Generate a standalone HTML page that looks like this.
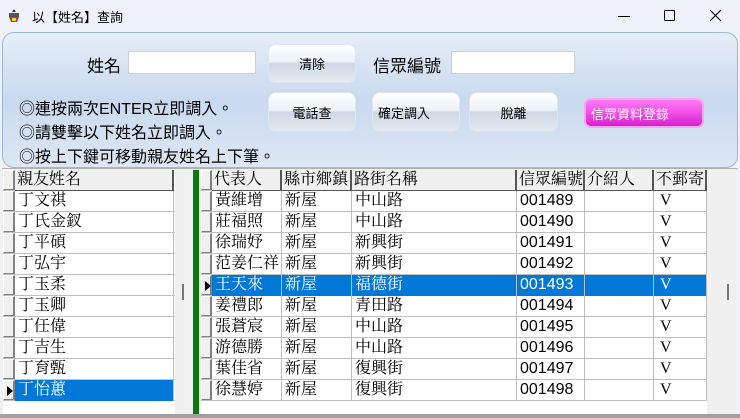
<!DOCTYPE html>
<html><head><meta charset="utf-8"><style>
*{margin:0;padding:0;box-sizing:border-box}
body{width:740px;height:418px;overflow:hidden;background:#eef2f8;font-family:"Liberation Sans","Noto Sans CJK TC",sans-serif;position:relative}
.a{position:absolute}
.panel{left:2px;top:32px;width:736px;height:136px;border:1px solid #9bb8dc;border-radius:12px;background:linear-gradient(#e6eef9 0%,#c9d9ee 50%,#dde7f5 100%)}
.lbl{font-size:17px;color:#000}
.inp{background:#fff;border:1px solid #c8cfd8}
.btn{border:1px solid #dde6f0;border-radius:8px;background:linear-gradient(#ffffff 0%,#eef3fa 45%,#cfd8e3 50%,#e4eaf2 100%);font-size:13px;display:flex;align-items:center;justify-content:center;color:#000}
.tip{font-size:16px;left:19px}
.grid{background:#fff}
.row{position:absolute;height:21px;border-bottom:1px solid #bfbfbf;font-family:"Liberation Serif","Noto Serif CJK TC",serif;font-size:16px;line-height:20px}
.c{position:absolute;top:0;height:21px;border-right:1px solid #bfbfbf;padding-left:3px;white-space:nowrap;overflow:hidden}
.ind{position:absolute;top:0;height:20px;background:#f0f0f0;border-right:2px solid #808080;border-bottom:1px solid #808080;border-top:1px solid #fff;border-left:1px solid #fff}
.hd .c{background:#f0f0f0;border-right:2px solid #555;border-bottom:1px solid #555;padding-left:2px}
.sel{background:#0078d7;color:#fff}
.arrow{position:absolute;left:3px;top:5px;width:0;height:0;border-top:5px solid transparent;border-bottom:5px solid transparent;border-left:6px solid #000}
</style></head><body>
<svg class="a" style="left:7px;top:8px" width="14" height="16" viewBox="0 0 14 16"><path d="M7 1 L9 4 L5 4Z" fill="#333"/><rect x="2" y="5" width="10" height="4" fill="#555"/><path d="M2 9 L12 9 L10 14 L4 14Z" fill="#c0392b"/><rect x="5" y="10" width="4" height="3" fill="#f5d040"/></svg>
<div class="a" style="left:32px;top:7px;font-size:13px">以【姓名】查詢</div>
<div class="a" style="left:618px;top:16px;width:12px;height:1px;background:#000"></div>
<div class="a" style="left:664px;top:10px;width:11px;height:11px;border:1px solid #000;border-radius:1px"></div>
<svg class="a" style="left:709px;top:9px" width="13" height="13"><path d="M1 1L12 12M12 1L1 12" stroke="#000" stroke-width="1.2"/></svg>

<div class="a panel"></div>
<div class="a lbl" style="left:87px;top:52px">姓名</div>
<div class="a inp" style="left:128px;top:51px;width:128px;height:23px"></div>
<div class="a btn" style="left:268px;top:44px;width:88px;height:39px">清除</div>
<div class="a lbl" style="left:373px;top:52px">信眾編號</div>
<div class="a inp" style="left:451px;top:51px;width:124px;height:23px"></div>
<div class="a btn" style="left:268px;top:92px;width:88px;height:40px">電話查</div>
<div class="a btn" style="left:372px;top:92px;width:88px;height:40px;justify-content:flex-start;padding-left:5px">確定調入</div>
<div class="a btn" style="left:469px;top:92px;width:89px;height:40px">脫離</div>
<div class="a" style="left:584px;top:98px;width:120px;height:30px;border-radius:7px;border:2px solid #f7a8f0;background:linear-gradient(#ff7af5 0%,#f04fe6 50%,#d81fd0 100%);color:#fff;font-size:13px;display:flex;align-items:center;padding-left:5px">信眾資料登錄</div>
<div class="a tip" style="top:95px">◎連按兩次ENTER立即調入。</div>
<div class="a tip" style="top:119px">◎請雙擊以下姓名立即調入。</div>
<div class="a tip" style="top:143px">◎按上下鍵可移動親友姓名上下筆。</div>

<div class="a" style="left:2px;top:168px;width:736px;height:1px;background:#b0b0b0"></div>
<div class="a grid" style="left:3px;top:170px;width:172px;height:244px"></div>
<div class="a" style="left:175px;top:170px;width:16px;height:244px;background:#f0f0f0"></div>
<div class="a" style="left:182px;top:284px;width:2px;height:16px;background:#777"></div>
<div class="a" style="left:193px;top:170px;width:6px;height:244px;background:#0a7a0a"></div>
<div class="a" style="left:3px;top:170px;width:172px;height:230px">
<div class="row hd" style="top:0;left:0;width:172px"><div class="ind" style="left:0;width:12px"></div><div class="c" style="left:12px;width:159px">親友姓名</div></div>
<div class="row" style="top:21px;left:0;width:172px"><div class="ind" style="left:0;width:12px"></div><div class="c" style="left:12px;width:159px">丁文祺</div></div>
<div class="row" style="top:42px;left:0;width:172px"><div class="ind" style="left:0;width:12px"></div><div class="c" style="left:12px;width:159px">丁氏金釵</div></div>
<div class="row" style="top:63px;left:0;width:172px"><div class="ind" style="left:0;width:12px"></div><div class="c" style="left:12px;width:159px">丁平碩</div></div>
<div class="row" style="top:84px;left:0;width:172px"><div class="ind" style="left:0;width:12px"></div><div class="c" style="left:12px;width:159px">丁弘宇</div></div>
<div class="row" style="top:105px;left:0;width:172px"><div class="ind" style="left:0;width:12px"></div><div class="c" style="left:12px;width:159px">丁玉柔</div></div>
<div class="row" style="top:126px;left:0;width:172px"><div class="ind" style="left:0;width:12px"></div><div class="c" style="left:12px;width:159px">丁玉卿</div></div>
<div class="row" style="top:147px;left:0;width:172px"><div class="ind" style="left:0;width:12px"></div><div class="c" style="left:12px;width:159px">丁任偉</div></div>
<div class="row" style="top:168px;left:0;width:172px"><div class="ind" style="left:0;width:12px"></div><div class="c" style="left:12px;width:159px">丁吉生</div></div>
<div class="row" style="top:189px;left:0;width:172px"><div class="ind" style="left:0;width:12px"></div><div class="c" style="left:12px;width:159px">丁育甄</div></div>
<div class="row" style="top:210px;left:0;width:172px"><div class="ind" style="left:0;width:12px"><div class="arrow"></div></div><div class="c sel" style="left:12px;width:159px">丁怡蕙</div></div>
</div>
<div class="a grid" style="left:201px;top:170px;width:506px;height:244px"></div>
<div class="a" style="left:707px;top:170px;width:30px;height:244px;background:#f0f0f0"></div>
<div class="a" style="left:727px;top:284px;width:2px;height:16px;background:#777"></div>
<div class="a" id="R" style="left:201px;top:170px;width:506px;height:230px">
<div class="row hd" style="top:0;left:0;width:506px"><div class="ind" style="left:0;width:11px"></div><div class="c" style="left:11px;width:70px">代表人</div><div class="c" style="left:81px;width:70px">縣市鄉鎮</div><div class="c" style="left:151px;width:165px">路街名稱</div><div class="c" style="left:316px;width:68px">信眾編號</div><div class="c" style="left:384px;width:69px">介紹人</div><div class="c" style="left:453px;width:53px">不郵寄</div></div>
</div>
<script>
var d=[["黃維增","中山路","001489"],["莊福照","中山路","001490"],["徐瑞妤","新興街","001491"],["范姜仁祥","新興街","001492"],["王天來","福德街","001493"],["姜禮郎","青田路","001494"],["張蒼宸","中山路","001495"],["游德勝","中山路","001496"],["葉佳省","復興街","001497"],["徐慧婷","復興街","001498"]];
var g=document.getElementById('R'),h='';
d.forEach(function(r,i){var s=i==4?' sel':'';h+='<div class="row" style="top:'+(21+i*21)+'px;left:0;width:506px"><div class="ind" style="left:0;width:11px">'+(i==4?'<div class="arrow"></div>':'')+'</div><div class="c'+s+'" style="left:11px;width:70px">'+r[0]+'</div><div class="c'+s+'" style="left:81px;width:70px">新屋</div><div class="c'+s+'" style="left:151px;width:165px">'+r[1]+'</div><div class="c'+s+'" style="left:316px;width:68px;font-family:Liberation Sans Narrow,Liberation Sans,sans-serif;font-size:16px">'+r[2]+'</div><div class="c'+s+'" style="left:384px;width:69px"></div><div class="c'+s+'" style="left:453px;width:53px;padding-left:6px">V</div></div>'});
g.insertAdjacentHTML('beforeend',h);
</script>
<div class="a" style="left:0;top:414px;width:740px;height:4px;background:#a0a0a0"></div>
</body></html>
